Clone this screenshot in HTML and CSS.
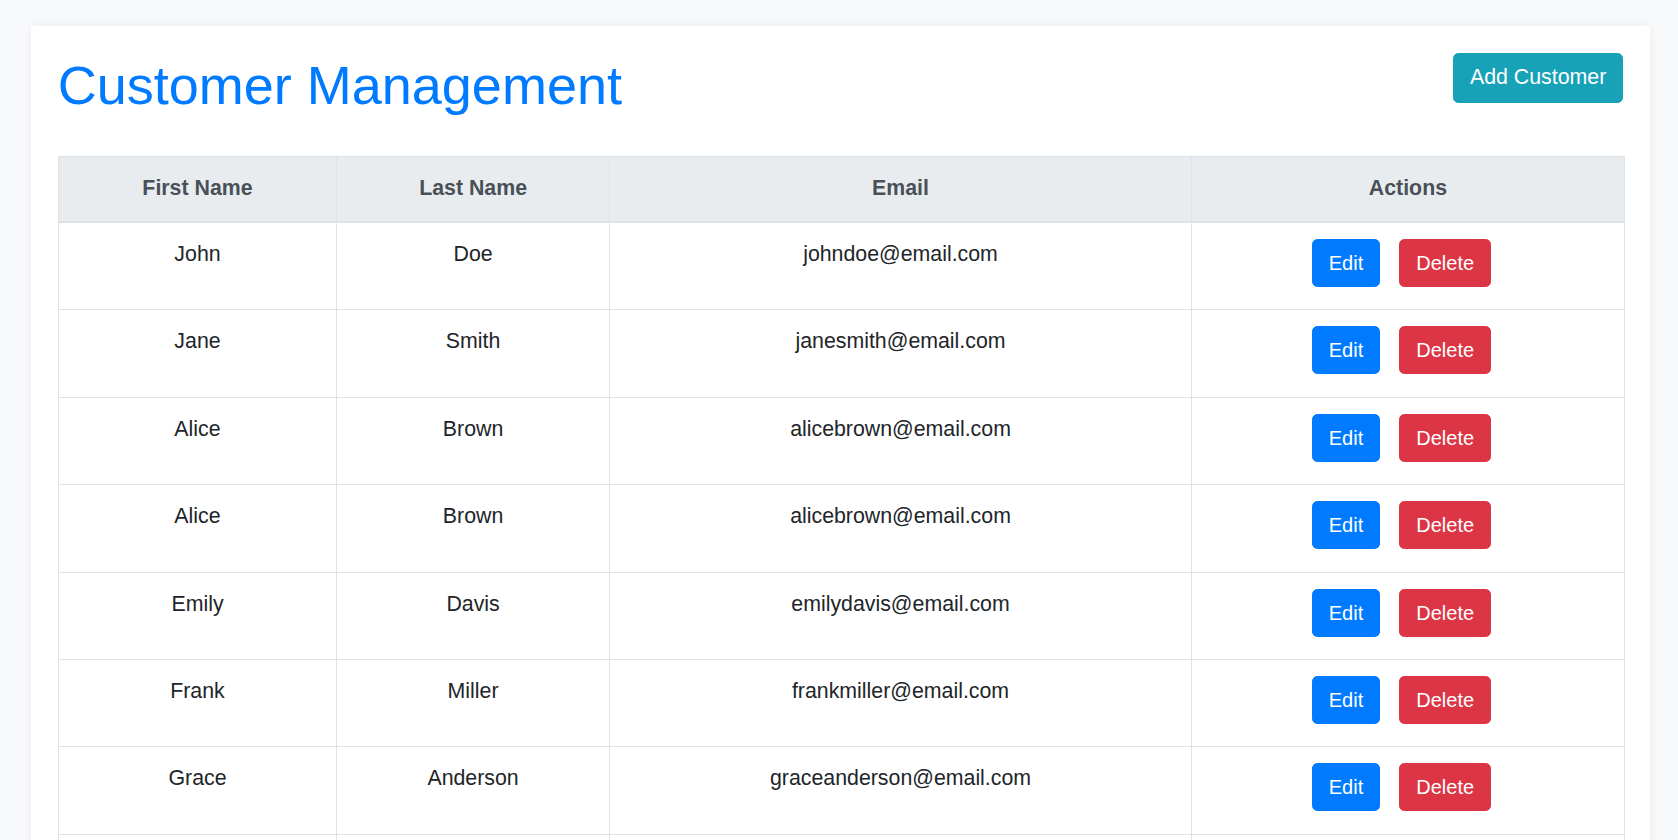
FILE: index.html
```html
<!DOCTYPE html>
<html lang="en">
<head>
<meta charset="utf-8">
<title>Customer Management</title>
<link rel="stylesheet" href="styles.css">
</head>
<body>
<div class="card">
  <div class="header">
    <h1 class="title">Customer Management</h1>
    <button class="btn btn-info">Add Customer</button>
  </div>
  <table class="table">
    <colgroup>
      <col class="c-first">
      <col class="c-last">
      <col class="c-email">
      <col class="c-actions">
    </colgroup>
    <thead>
      <tr><th>First Name</th><th>Last Name</th><th>Email</th><th>Actions</th></tr>
    </thead>
    <tbody>
      <tr><td>John</td><td>Doe</td><td>johndoe@email.com</td><td><div class="actions"><button class="btn-s btn-edit">Edit</button><button class="btn-s btn-delete">Delete</button></div></td></tr>
      <tr><td>Jane</td><td>Smith</td><td>janesmith@email.com</td><td><div class="actions"><button class="btn-s btn-edit">Edit</button><button class="btn-s btn-delete">Delete</button></div></td></tr>
      <tr><td>Alice</td><td>Brown</td><td>alicebrown@email.com</td><td><div class="actions"><button class="btn-s btn-edit">Edit</button><button class="btn-s btn-delete">Delete</button></div></td></tr>
      <tr><td>Alice</td><td>Brown</td><td>alicebrown@email.com</td><td><div class="actions"><button class="btn-s btn-edit">Edit</button><button class="btn-s btn-delete">Delete</button></div></td></tr>
      <tr><td>Emily</td><td>Davis</td><td>emilydavis@email.com</td><td><div class="actions"><button class="btn-s btn-edit">Edit</button><button class="btn-s btn-delete">Delete</button></div></td></tr>
      <tr><td>Frank</td><td>Miller</td><td>frankmiller@email.com</td><td><div class="actions"><button class="btn-s btn-edit">Edit</button><button class="btn-s btn-delete">Delete</button></div></td></tr>
      <tr><td>Grace</td><td>Anderson</td><td>graceanderson@email.com</td><td><div class="actions"><button class="btn-s btn-edit">Edit</button><button class="btn-s btn-delete">Delete</button></div></td></tr>
      <tr class="row-empty"><td></td><td></td><td></td><td></td></tr>
    </tbody>
  </table>
</div>
</body>
</html>
```
FILE: styles.css
```css
* { box-sizing: border-box; }

body {
  margin: 0;
  background: #f8f9fa;
  font-family: "Liberation Sans", Arial, sans-serif;
  font-size: 21.33px;
  line-height: 1.5;
  color: #212529;
}

.card {
  width: 1619px;
  margin: 26px 0 0 31px;
  padding: 26.7px;
  background: #fff;
  box-shadow: 0 0 12px rgba(0, 0, 0, 0.05);
}

.header {
  display: flex;
  justify-content: space-between;
  align-items: flex-start;
  margin-bottom: 39.3px;
}

.title {
  margin: 0;
  font-size: 54px;
  font-weight: 400;
  line-height: 64px;
  color: #007bff;
}

.btn {
  font-family: inherit;
  font-size: 21.33px;
  line-height: 1.5;
  padding: 8px 16px;
  border: 1px solid transparent;
  border-radius: 5.33px;
  color: #fff;
  cursor: pointer;
}

.btn-info {
  background: #17a2b8;
  border-color: #17a2b8;
}

.table {
  width: 100%;
  border-collapse: collapse;
  table-layout: fixed;
}

.c-first { width: 278.6px; }
.c-last { width: 272.6px; }
.c-email { width: 582.3px; }
.c-actions { width: 432.5px; }

.table th,
.table td {
  border: 1px solid #dee2e6;
  padding: 16px;
  text-align: center;
  vertical-align: top;
}

.table thead th {
  background: #e9ecef;
  color: #495057;
  font-weight: 700;
  border-bottom-width: 2px;
}

.row-empty td {
  height: 87.4px;
}

.actions {
  display: flex;
  justify-content: center;
  gap: 19px;
  padding-right: 13px;
  padding-bottom: 6.4px;
}

.btn-s {
  font-family: inherit;
  font-size: 20px;
  line-height: 1.5;
  padding: 8px 16px;
  border: 1px solid transparent;
  border-radius: 5.33px;
  color: #fff;
  cursor: pointer;
}

.btn-edit {
  background: #007bff;
  border-color: #007bff;
}

.btn-delete {
  background: #dc3545;
  border-color: #dc3545;
}
```
